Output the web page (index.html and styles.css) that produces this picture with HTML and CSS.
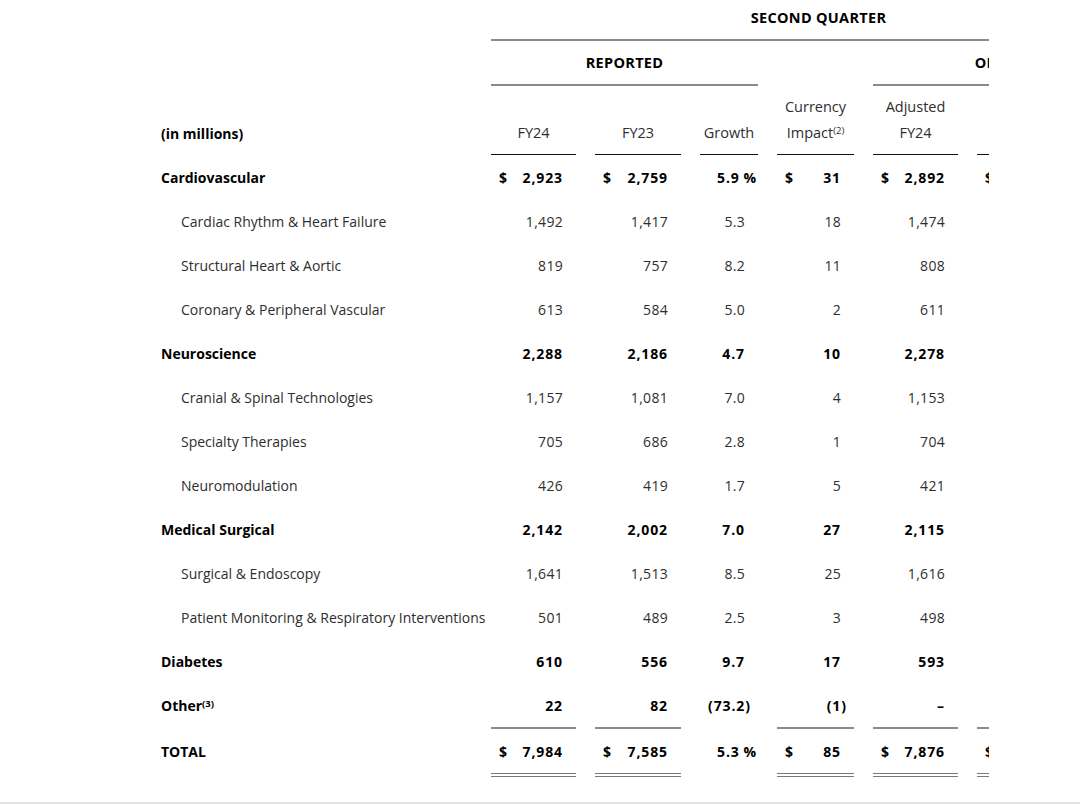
FILE: index.html
```html
<!DOCTYPE html>
<html lang="en">
<head>
<meta charset="utf-8">
<title>Second Quarter Revenue</title>
<link rel="stylesheet" href="styles.css">
</head>
<body>
<div class="page">
  <div class="clip">
    <div class="tbl">
      <div class="row r-a">
        <div class="lbl"></div>
        <div class="grp span-all">SECOND QUARTER</div>
      </div>
      <div class="row r-b">
        <div class="lbl"></div>
        <div class="grp span-rep">REPORTED</div>
        <div class="grp span-org">ORGANIC</div>
      </div>
      <div class="row r-c">
        <div class="lbl hd"><span>(in millions)</span></div>
        <div class="ch"><span>FY24</span></div>
        <div class="ch"><span>FY23</span></div>
        <div class="ch"><span>Growth</span></div>
        <div class="ch"><span>Currency<br>Impact<sup class="fn">(2)</sup></span></div>
        <div class="ch"><span>Adjusted<br>FY24</span></div>
        <div class="ch"><span>FY23</span></div>
        <div class="ch"><span>Growth</span></div>
      </div>

      <div class="row b">
        <div class="lbl">Cardiovascular</div>
        <div class="n"><span class="d">$</span><span class="v">2,923</span></div>
        <div class="n"><span class="d">$</span><span class="v">2,759</span></div>
        <div class="g"><span class="v">5.9<span class="pc"> %</span></span></div>
        <div class="n"><span class="d">$</span><span class="v">31</span></div>
        <div class="n"><span class="d">$</span><span class="v">2,892</span></div>
        <div class="n"><span class="d">$</span><span class="v">2,759</span></div>
        <div class="g"><span class="v">4.8<span class="pc"> %</span></span></div>
      </div>
      <div class="row s">
        <div class="lbl">Cardiac Rhythm &amp; Heart Failure</div>
        <div class="n"><span class="v">1,492</span></div>
        <div class="n"><span class="v">1,417</span></div>
        <div class="g"><span class="v">5.3</span></div>
        <div class="n"><span class="v">18</span></div>
        <div class="n"><span class="v">1,474</span></div>
        <div class="n"><span class="v">1,417</span></div>
        <div class="g"><span class="v">4.0</span></div>
      </div>
      <div class="row s">
        <div class="lbl">Structural Heart &amp; Aortic</div>
        <div class="n"><span class="v">819</span></div>
        <div class="n"><span class="v">757</span></div>
        <div class="g"><span class="v">8.2</span></div>
        <div class="n"><span class="v">11</span></div>
        <div class="n"><span class="v">808</span></div>
        <div class="n"><span class="v">757</span></div>
        <div class="g"><span class="v">6.7</span></div>
      </div>
      <div class="row s">
        <div class="lbl">Coronary &amp; Peripheral Vascular</div>
        <div class="n"><span class="v">613</span></div>
        <div class="n"><span class="v">584</span></div>
        <div class="g"><span class="v">5.0</span></div>
        <div class="n"><span class="v">2</span></div>
        <div class="n"><span class="v">611</span></div>
        <div class="n"><span class="v">584</span></div>
        <div class="g"><span class="v">4.6</span></div>
      </div>
      <div class="row b">
        <div class="lbl">Neuroscience</div>
        <div class="n"><span class="v">2,288</span></div>
        <div class="n"><span class="v">2,186</span></div>
        <div class="g"><span class="v">4.7</span></div>
        <div class="n"><span class="v">10</span></div>
        <div class="n"><span class="v">2,278</span></div>
        <div class="n"><span class="v">2,186</span></div>
        <div class="g"><span class="v">4.2</span></div>
      </div>
      <div class="row s">
        <div class="lbl">Cranial &amp; Spinal Technologies</div>
        <div class="n"><span class="v">1,157</span></div>
        <div class="n"><span class="v">1,081</span></div>
        <div class="g"><span class="v">7.0</span></div>
        <div class="n"><span class="v">4</span></div>
        <div class="n"><span class="v">1,153</span></div>
        <div class="n"><span class="v">1,081</span></div>
        <div class="g"><span class="v">6.7</span></div>
      </div>
      <div class="row s">
        <div class="lbl">Specialty Therapies</div>
        <div class="n"><span class="v">705</span></div>
        <div class="n"><span class="v">686</span></div>
        <div class="g"><span class="v">2.8</span></div>
        <div class="n"><span class="v">1</span></div>
        <div class="n"><span class="v">704</span></div>
        <div class="n"><span class="v">686</span></div>
        <div class="g"><span class="v">2.6</span></div>
      </div>
      <div class="row s">
        <div class="lbl">Neuromodulation</div>
        <div class="n"><span class="v">426</span></div>
        <div class="n"><span class="v">419</span></div>
        <div class="g"><span class="v">1.7</span></div>
        <div class="n"><span class="v">5</span></div>
        <div class="n"><span class="v">421</span></div>
        <div class="n"><span class="v">419</span></div>
        <div class="g"><span class="v">0.5</span></div>
      </div>
      <div class="row b">
        <div class="lbl">Medical Surgical</div>
        <div class="n"><span class="v">2,142</span></div>
        <div class="n"><span class="v">2,002</span></div>
        <div class="g"><span class="v">7.0</span></div>
        <div class="n"><span class="v">27</span></div>
        <div class="n"><span class="v">2,115</span></div>
        <div class="n"><span class="v">2,002</span></div>
        <div class="g"><span class="v">5.6</span></div>
      </div>
      <div class="row s">
        <div class="lbl">Surgical &amp; Endoscopy</div>
        <div class="n"><span class="v">1,641</span></div>
        <div class="n"><span class="v">1,513</span></div>
        <div class="g"><span class="v">8.5</span></div>
        <div class="n"><span class="v">25</span></div>
        <div class="n"><span class="v">1,616</span></div>
        <div class="n"><span class="v">1,513</span></div>
        <div class="g"><span class="v">6.8</span></div>
      </div>
      <div class="row s">
        <div class="lbl">Patient Monitoring &amp; Respiratory Interventions</div>
        <div class="n"><span class="v">501</span></div>
        <div class="n"><span class="v">489</span></div>
        <div class="g"><span class="v">2.5</span></div>
        <div class="n"><span class="v">3</span></div>
        <div class="n"><span class="v">498</span></div>
        <div class="n"><span class="v">489</span></div>
        <div class="g"><span class="v">1.8</span></div>
      </div>
      <div class="row b">
        <div class="lbl">Diabetes</div>
        <div class="n"><span class="v">610</span></div>
        <div class="n"><span class="v">556</span></div>
        <div class="g"><span class="v">9.7</span></div>
        <div class="n"><span class="v">17</span></div>
        <div class="n"><span class="v">593</span></div>
        <div class="n"><span class="v">556</span></div>
        <div class="g"><span class="v">6.7</span></div>
      </div>
      <div class="row b">
        <div class="lbl">Other<sup class="fn">(3)</sup></div>
        <div class="n"><span class="v">22</span></div>
        <div class="n"><span class="v">82</span></div>
        <div class="g"><span class="v">(73.2<span class="pr">)</span></span></div>
        <div class="n"><span class="v">(1<span class="pr">)</span></span></div>
        <div class="n"><span class="v">–</span></div>
        <div class="n"><span class="v">82</span></div>
        <div class="g"><span class="v">–</span></div>
      </div>
      <div class="row b total">
        <div class="lbl">TOTAL</div>
        <div class="n tl"><span class="d">$</span><span class="v">7,984</span></div>
        <div class="n tl"><span class="d">$</span><span class="v">7,585</span></div>
        <div class="g"><span class="v">5.3<span class="pc"> %</span></span></div>
        <div class="n tl"><span class="d">$</span><span class="v">85</span></div>
        <div class="n tl"><span class="d">$</span><span class="v">7,876</span></div>
        <div class="n tl"><span class="d">$</span><span class="v">7,585</span></div>
        <div class="g"><span class="v">3.8<span class="pc"> %</span></span></div>
      </div>
    </div>
  </div>
</div>
</body>
</html>
```

FILE: styles.css
```css
* { box-sizing: border-box; }

html, body {
  margin: 0;
  padding: 0;
  background: #ffffff;
}

body {
  font-family: "Open Sans", "Noto Sans", sans-serif;
  font-size: 14px;
  color: #2e2e2e;
}

.page {
  height: 804px;
  border-bottom: 2px solid #e4e4e4;
  overflow: hidden;
}

.clip {
  width: 989px;
  overflow: hidden;
}

.tbl {
  width: 1146px;
}

.row {
  display: grid;
  grid-template-columns: 472px 85px 86px 58px 77px 85px 85px 65px;
  column-gap: 19px;
  height: 44px;
  align-items: center;
  white-space: nowrap;
}

.lbl {
  padding-left: 161px;
}

.row.s .lbl {
  padding-left: 181px;
}

.row.b {
  color: #000000;
  font-weight: 700;
}

/* group header rows */
.r-a { height: 41px; align-items: stretch; }
.r-b { height: 45px; align-items: stretch; }

.grp {
  display: flex;
  align-items: center;
  justify-content: center;
  font-size: 14.5px;
  font-weight: 700;
  letter-spacing: 0.3px;
  color: #000000;
  border-bottom: 2px solid #8a8a8a;
}

.r-a .grp { padding-bottom: 5px; }

.span-all { grid-column: 2 / 9; }
.span-rep { grid-column: 2 / 5; }
.span-org { grid-column: 6 / 9; }

/* column header row */
.r-c {
  height: 69px;
  align-items: stretch;
}

.r-c .lbl {
  display: flex;
  align-items: flex-end;
  padding-bottom: 8px;
  line-height: 26px;
}

.hd {
  font-weight: 700;
  color: #000000;
}

.ch {
  display: flex;
  align-items: flex-end;
  justify-content: center;
  text-align: center;
  line-height: 26px;
  padding-bottom: 8px;
  border-bottom: 1px solid #111111;
  font-size: 14.5px;
}

.fn {
  font-size: 9.5px;
  line-height: 0;
  vertical-align: 4px;
}

/* numeric cells */
.n {
  display: flex;
  align-items: center;
  padding: 0 13px 0 8px;
  height: 100%;
}

.v {
  letter-spacing: 0.3px;
}

.row.b .v {
  letter-spacing: 0.9px;
}

.n .v {
  margin-left: auto;
}

.g {
  display: flex;
  align-items: center;
  justify-content: flex-end;
  padding-right: 13px;
  height: 100%;
}

.pc {
  letter-spacing: 0;
  margin-right: -11px;
}

.pr {
  letter-spacing: 0;
  margin-right: -5px;
}

/* total row */
.total {
  height: 50px;
  align-items: stretch;
}

.total .lbl {
  display: flex;
  align-items: center;
  padding-top: 2px;
  padding-bottom: 4px;
}

.total .g {
  padding-top: 2px;
  padding-bottom: 4px;
}

.tl {
  border-top: 2px solid #8a8a8a;
  border-bottom: 4px double #7a7a7a;
}
```
